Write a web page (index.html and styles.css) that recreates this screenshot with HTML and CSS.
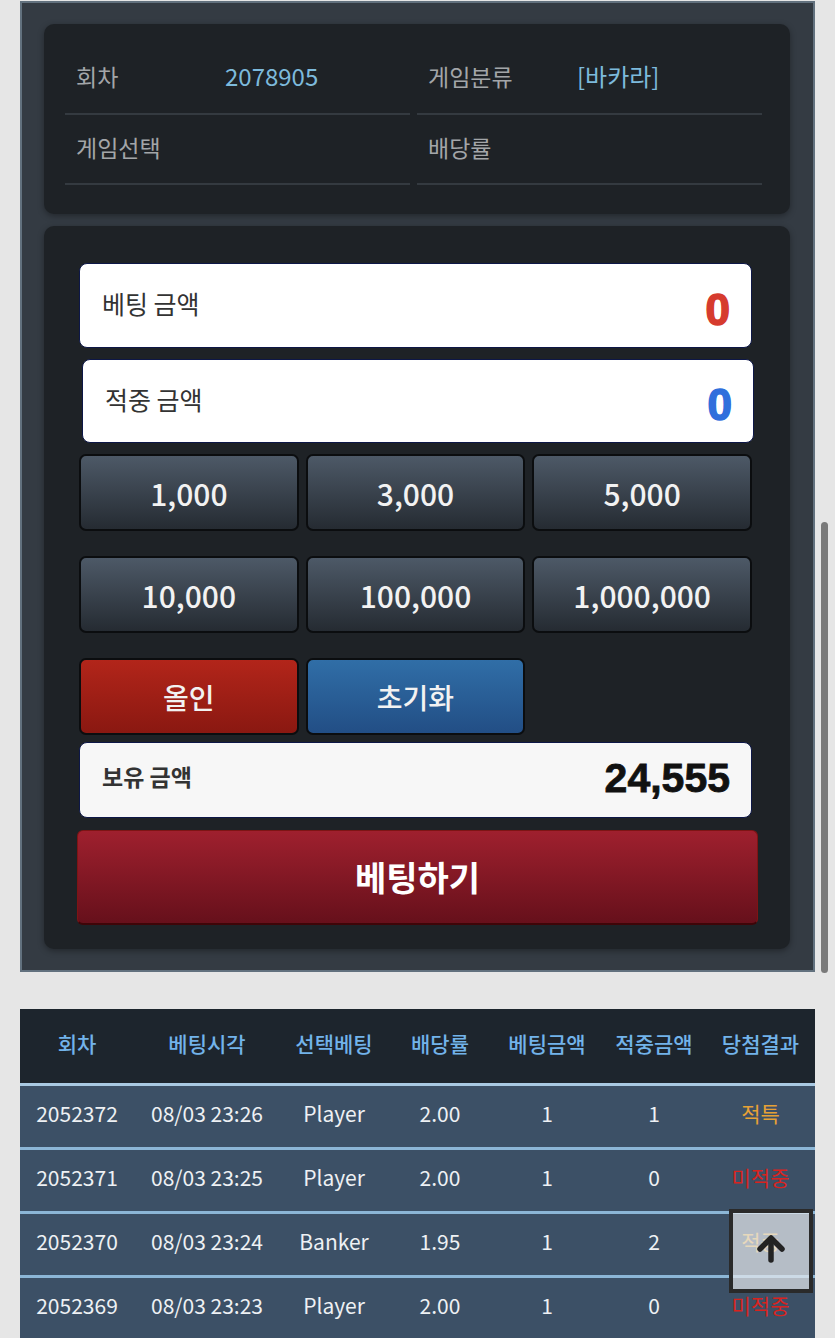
FILE: index.html
```html
<!DOCTYPE html>
<html>
<head>
    <meta charset="UTF-8">
    <title>바카라 베팅</title>
    <link rel="stylesheet" href="styles.css">
</head>
<body>
    <div class="bet-panel">
        <div class="info-card">
            <div class="info-grid">
                <div class="info-cell"><span class="info-label">회차</span><span class="info-value">2078905</span></div>
                <div class="info-cell"><span class="info-label">게임분류</span><span class="info-value">[바카라]</span></div>
                <div class="info-cell"><span class="info-label">게임선택</span><span class="info-value"></span></div>
                <div class="info-cell"><span class="info-label">배당률</span><span class="info-value"></span></div>
            </div>
        </div>

        <div class="slip-card">
            <div class="amount-box">
                <span class="amount-label">베팅 금액</span>
                <span class="amount-value red">0</span>
            </div>
            <div class="amount-box shifted">
                <span class="amount-label">적중 금액</span>
                <span class="amount-value blue">0</span>
            </div>

            <div class="chip-grid">
                <button class="chip">1,000</button>
                <button class="chip">3,000</button>
                <button class="chip">5,000</button>
                <button class="chip">10,000</button>
                <button class="chip">100,000</button>
                <button class="chip">1,000,000</button>
                <button class="chip chip-allin">올인</button>
                <button class="chip chip-reset">초기화</button>
            </div>

            <div class="amount-box balance">
                <span class="amount-label">보유 금액</span>
                <span class="amount-value">24,555</span>
            </div>

            <button class="bet-btn">베팅하기</button>
        </div>

        <div class="scroll-thumb"></div>
    </div>

    <table class="history">
        <thead>
            <tr>
                <th>회차</th>
                <th>베팅시각</th>
                <th>선택베팅</th>
                <th>배당률</th>
                <th>베팅금액</th>
                <th>적중금액</th>
                <th>당첨결과</th>
            </tr>
        </thead>
        <tbody>
            <tr>
                <td>2052372</td><td>08/03 23:26</td><td>Player</td><td>2.00</td><td>1</td><td>1</td><td class="res-tie">적특</td>
            </tr>
            <tr>
                <td>2052371</td><td>08/03 23:25</td><td>Player</td><td>2.00</td><td>1</td><td>0</td><td class="res-lose">미적중</td>
            </tr>
            <tr>
                <td>2052370</td><td>08/03 23:24</td><td>Banker</td><td>1.95</td><td>1</td><td>2</td><td class="res-win">적중</td>
            </tr>
            <tr>
                <td>2052369</td><td>08/03 23:23</td><td>Player</td><td>2.00</td><td>1</td><td>0</td><td class="res-lose">미적중</td>
            </tr>
        </tbody>
    </table>

    <button class="to-top">
        <svg width="30" height="28" viewBox="0 0 30 28">
            <path d="M4 14 L15 3 L26 14" fill="none" stroke="#232323" stroke-width="5.5" stroke-linecap="round" stroke-linejoin="round"/>
            <path d="M15 5 V25" fill="none" stroke="#232323" stroke-width="5.5" stroke-linecap="round"/>
        </svg>
    </button>
</body>
</html>
```

FILE: styles.css
```css
* {
    margin: 0;
    padding: 0;
    box-sizing: border-box;
}

body {
    font-family: "Noto Sans CJK KR", "Noto Sans", sans-serif;
    background-color: #e6e6e6;
    padding-top: 1px;
}

button {
    font-family: inherit;
    border: none;
    cursor: pointer;
}

/* 상단 베팅 패널 */
.bet-panel {
    position: relative;
    margin: 0 20px;
    background-color: #343b43;
    border: 2px solid #62717e;
    padding: 21px 23px 21px 22px;
}

.info-card,
.slip-card {
    background-color: #1e2226;
    border-radius: 10px;
    box-shadow: 0 2px 6px rgba(0,0,0,0.35);
}

.info-card {
    padding: 19px 28px 29px 21px;
}

.info-grid {
    display: grid;
    grid-template-columns: 1fr 1fr;
    column-gap: 7px;
}

.info-cell {
    display: flex;
    align-items: center;
    height: 72px;
    padding-left: 11px;
    padding-bottom: 4px;
    border-bottom: 2px solid #343a40;
    line-height: 1;
}

.info-cell:nth-child(n+3) {
    height: 70px;
    padding-bottom: 3px;
}

.info-label {
    width: 149px;
    font-size: 23px;
    color: #a3a6a9;
}

.info-value {
    font-size: 24px;
    color: #7dbadc;
}

.slip-card {
    margin-top: 12px;
    padding: 37px 38px 24px 35px;
    display: flex;
    flex-direction: column;
}

.amount-box {
    display: flex;
    justify-content: space-between;
    align-items: center;
    height: 85px;
    background-color: #fff;
    border: 1px solid #0d1747;
    border-radius: 8px;
    padding: 0 21px 0 22px;
    line-height: 1;
}

.amount-box.shifted {
    height: 84px;
    margin: 11px -2px 0 3px;
}

.amount-label {
    font-size: 25px;
    color: #333;
    margin-top: -4px;
}

.amount-value {
    font-family: "Liberation Sans", Arial, sans-serif;
    font-weight: 700;
    font-size: 44px;
    margin-top: 8px;
    -webkit-text-stroke: 1.5px currentColor;
}

.amount-value.red {
    color: #d63b2e;
}

.amount-value.blue {
    color: #2f6fdc;
}

.chip-grid {
    margin-top: 11px;
    display: grid;
    grid-template-columns: repeat(3, 1fr);
    column-gap: 7px;
    row-gap: 25px;
}

.chip {
    height: 77px;
    border: 2px solid #0b0d0f;
    border-radius: 7px;
    background: linear-gradient(to bottom, #4d5967, #252b32);
    color: #f2f2f2;
    font-size: 30px;
    font-weight: 500;
    line-height: 1;
}

.chip-allin {
    background: linear-gradient(to bottom, #b2251a, #8a1811);
    font-size: 28px;
}

.chip-reset {
    background: linear-gradient(to bottom, #306ea7, #224e85);
    font-size: 28px;
}

.amount-box.balance {
    margin-top: 7px;
    height: 76px;
    background-color: #f7f7f7;
}

.balance .amount-label {
    font-size: 23px;
    font-weight: 700;
    color: #333;
    margin-top: -8px;
}

.balance .amount-value {
    font-size: 41px;
    color: #111;
    margin-top: -4px;
    -webkit-text-stroke: 0.8px currentColor;
}

.bet-btn {
    margin: 12px -6px 0 -2px;
    height: 95px;
    border-radius: 6px;
    border: 1px solid #7e1414;
    border-bottom: 2px solid #3e0508;
    background: linear-gradient(to bottom, #9f202e, #66101b);
    color: #fff;
    font-size: 34px;
    font-weight: 700;
    line-height: 1;
}

.scroll-thumb {
    position: absolute;
    top: 519px;
    right: -15px;
    width: 7px;
    height: 451px;
    border-radius: 4px;
    background-color: #7a7a7a;
}

/* 베팅 내역 */
.history {
    width: 795px;
    margin: 37px 20px 0 20px;
    border-collapse: collapse;
    table-layout: fixed;
    line-height: 1;
}

.history th {
    height: 75px;
    padding-bottom: 5px;
    background-color: #1d252d;
    color: #72b3ea;
    font-size: 21px;
    font-weight: 500;
}

.history th:nth-child(1) { width: 114px; }
.history th:nth-child(2) { width: 146px; }
.history th:nth-child(3) { width: 108px; }
.history th:nth-child(4) { width: 104px; }
.history th:nth-child(5) { width: 110px; }
.history th:nth-child(6) { width: 104px; }
.history th:nth-child(7) { width: 109px; }

.history td {
    height: 64px;
    padding-bottom: 6px;
    background-color: #3c5066;
    border-top: 3px solid #8cb6d6;
    color: #eef1f4;
    font-size: 21px;
    text-align: center;
    white-space: nowrap;
}

.history tbody tr:first-child td {
    border-top-color: #a9c9e2;
}

.history .res-tie {
    color: #e6a136;
}

.history .res-win {
    color: #e9b040;
}

.history .res-lose {
    color: #d8231f;
}

.to-top {
    position: fixed;
    right: 22px;
    bottom: 45px;
    width: 84px;
    height: 84px;
    border: 4px solid #2a2a2a;
    background-color: rgba(228,232,236,0.72);
    display: flex;
    align-items: center;
    justify-content: center;
    padding-bottom: 4px;
}
```
